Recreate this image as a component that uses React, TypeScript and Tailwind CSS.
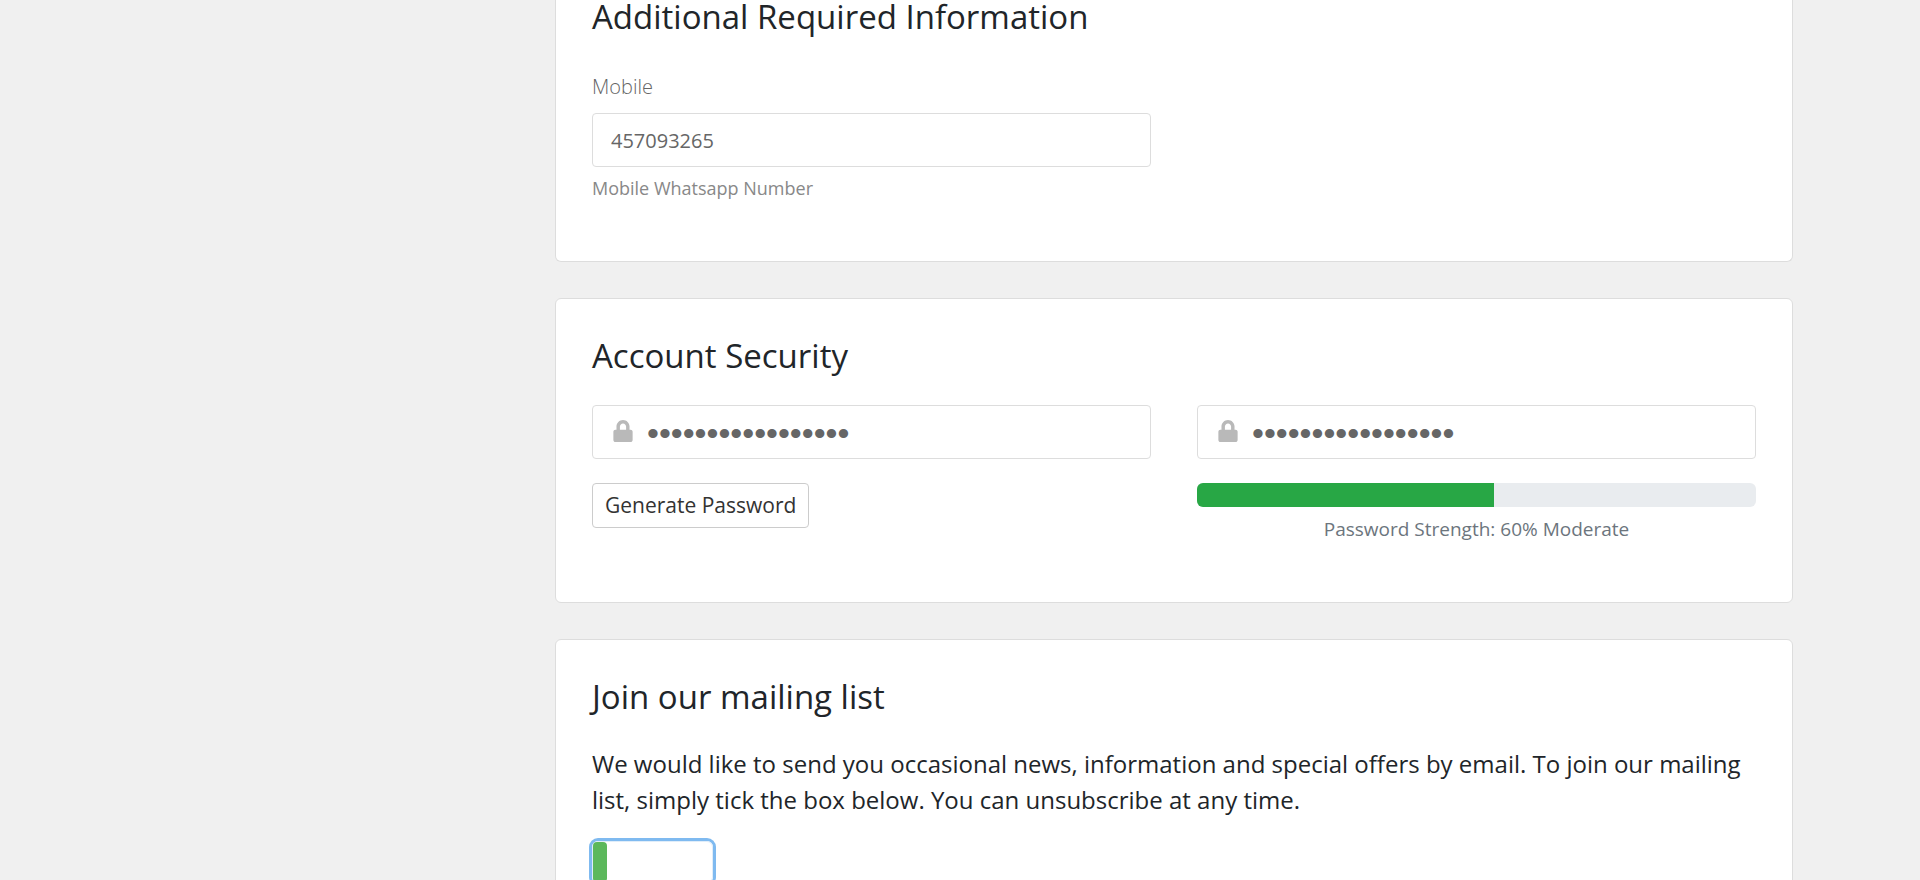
import { useState } from "react";
import type { ReactNode } from "react";

function Card({ title, className, children }: { title: string; className: string; children: ReactNode }) {
  return (
    <section className={`border border-[#dddddd] bg-white px-9 ${className}`}>
      <h2 className="text-[33px] leading-[33px]">{title}</h2>
      {children}
    </section>
  );
}

function PasswordField({ id, label }: { id: string; label: string }) {
  return (
    <div className="relative">
      <label
        htmlFor={id}
        aria-label={label}
        className="absolute left-0 top-0 flex h-[54px] w-[62px] items-center justify-center text-[#b9b9b9]"
      >
        <svg viewBox="0 0 448 512" className="mb-0.5 h-[22px] w-[20px]" fill="currentColor" aria-hidden="true">
          <path d="M400 224h-24v-72C376 68.200 307.800 0 224 0S72 68.200 72 152v72H48c-26.500 0-48 21.500-48 48v192c0 26.500 21.500 48 48 48h352c26.500 0 48-21.500 48-48V272c0-26.500-21.500-48-48-48zm-104 0H152v-72c0-39.700 32.300-72 72-72s72 32.300 72 72v72z" />
        </svg>
      </label>
      <input
        id={id}
        type="password"
        aria-label={label}
        defaultValue="k7Vq2mXw9LpZr4TsB"
        className="block h-[54px] w-full rounded border border-[#dddddd] bg-white pl-[54px] pr-[18px] pt-0.5 font-['Liberation_Sans',sans-serif] text-[34px] text-[#666666] outline-none"
      />
    </div>
  );
}

export default function App() {
  const [subscribed, setSubscribed] = useState(false);
  const barWidth = 53.2;

  return (
    <div className="flex h-screen overflow-hidden bg-[#f0f0f0] px-[127px] font-['Open_Sans','Noto_Sans',sans-serif] text-[#212529]">
      <aside className="w-[428px] shrink-0" />
      <main className="flex min-w-0 flex-1 flex-col gap-9">
        <Card title="Additional Required Information" className="shrink-0 rounded-b-md border-t-0 pb-[59px]">
          <div className="mt-[39px] grid grid-cols-2 gap-x-[46px]">
            <div>
              <label htmlFor="mobile" className="block text-xl leading-[30px] font-light text-[#666666]">
                Mobile
              </label>
              <input
                id="mobile"
                type="text"
                defaultValue="457093265"
                className="mt-[11px] block h-[54px] w-full rounded border border-[#dddddd] bg-white px-[18px] text-xl text-[#666666] outline-none"
              />
              <p className="mt-2 text-lg leading-[27px] text-[#888888]">Mobile Whatsapp Number</p>
            </div>
          </div>
        </Card>

        <Card title="Account Security" className="shrink-0 rounded-md pt-10 pb-[58px]">
          <div className="mt-[33px] grid grid-cols-2 gap-x-[46px] gap-y-6">
            <PasswordField id="password" label="Password" />
            <PasswordField id="confirm" label="Confirm Password" />
            <div>
              <button type="button" className="h-[45px] rounded border border-[#cccccc] bg-white px-3 text-[21px] text-[#333333]">
                Generate Password
              </button>
            </div>
            <div>
              <div className="flex h-6 overflow-hidden rounded-md bg-[#e9ecef]">
                <div className="bg-[#28a745]" style={{ width: `${barWidth}%` }} />
              </div>
              <p className="mt-2 text-center text-[19px] leading-[29px] text-[#6c757d]">Password Strength: 60% Moderate</p>
            </div>
          </div>
        </Card>

        <Card title="Join our mailing list" className="shrink-0 rounded-md pt-10 pb-[58px]">
          <p className="mt-[33px] text-2xl leading-9">
            We would like to send you occasional news, information and special offers by email. To join our mailing list,
            simply tick the box below. You can unsubscribe at any time.
          </p>
          <button
            type="button"
            role="switch"
            aria-checked={subscribed}
            aria-label="Join our mailing list"
            onClick={() => setSubscribed(!subscribed)}
            className="mt-[23px] flex h-[42px] w-[121px] rounded-md border border-[#e0edf9] ring-[3px] ring-[#7fbaf0]"
          >
            <span className="h-full w-[14px] rounded bg-[#5cb85c]" />
          </button>
        </Card>
      </main>
    </div>
  );
}
